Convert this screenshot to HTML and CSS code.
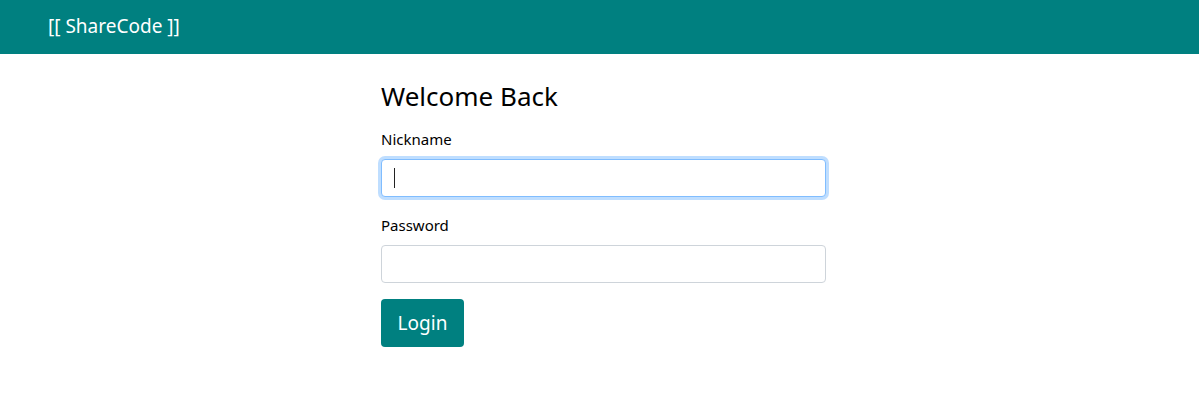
FILE: index.html
```html
<!DOCTYPE html>
<html lang="en">
<head>
<meta charset="utf-8">
<title>ShareCode - Login</title>
<link rel="stylesheet" href="styles.css">
</head>
<body>
<header class="navbar">
  <a class="brand" href="#">[[ ShareCode ]]</a>
</header>
<main class="page">
  <form class="login">
    <h3 class="title">Welcome Back</h3>
    <div class="field">
      <label class="label" for="nick">Nickname</label>
      <div class="input focused" id="nick"><span class="caret"></span></div>
    </div>
    <div class="field field-last">
      <label class="label" for="pass">Password</label>
      <div class="input" id="pass"></div>
    </div>
    <button type="button" class="btn">Login</button>
  </form>
</main>
</body>
</html>
```

FILE: styles.css
```css
* { box-sizing: border-box; }
html, body { margin: 0; padding: 0; background: #fff; }
body {
  font-family: "Noto Sans", "Open Sans", sans-serif;
  color: #212529;
}
.navbar {
  height: 54px;
  background: #008080;
  display: flex;
  align-items: center;
  padding-left: 48px;
}
.brand {
  color: #fff;
  text-decoration: none;
  font-size: 19px;
  line-height: 1;
  padding-bottom: 2px;
}
.page {
  padding: 25px 0 0 381px;
}
.login {
  width: 445px;
  display: flex;
  flex-direction: column;
}
.title {
  margin: 0 0 16px;
  font-weight: 400;
  font-size: 26px;
  line-height: 34px;
  color: #000;
}
.field {
  display: flex;
  flex-direction: column;
  margin-bottom: 18px;
}
.field-last {
  margin-bottom: 16px;
}
.label {
  font-size: 15px;
  line-height: 20px;
  margin-bottom: 10px;
  color: #000;
}
.input {
  height: 38px;
  border: 1px solid #ced4da;
  border-radius: 4px;
  background: #fff;
  display: flex;
  align-items: center;
  padding-left: 12px;
}
.input.focused {
  border-color: #80bdff;
  box-shadow: 0 0 0 3px rgba(0, 123, 255, 0.25);
}
.caret {
  width: 1px;
  height: 20px;
  background: #222;
}
.btn {
  align-self: flex-start;
  width: 83px;
  height: 48px;
  border: none;
  border-radius: 4px;
  background: #008080;
  color: #fff;
  font-family: inherit;
  font-size: 19px;
  padding: 0;
}
```
